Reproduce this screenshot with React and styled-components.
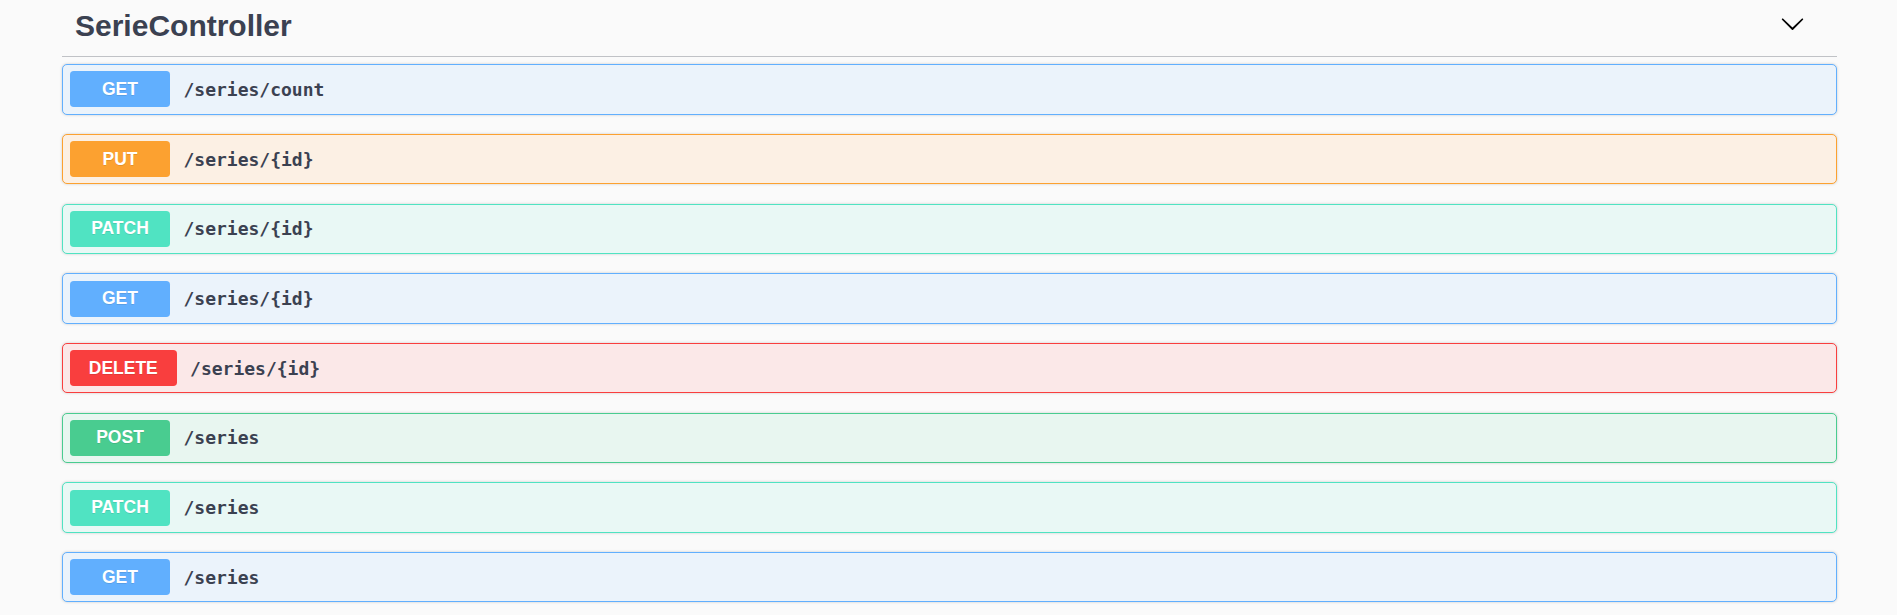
import React from "react";
import styled, { createGlobalStyle } from "styled-components";

const Global = createGlobalStyle`
  html, body { margin: 0; padding: 0; background: #fafafa; }
  body { font-family: "Liberation Sans", Arial, sans-serif; }
`;

const COLORS = {
  GET: { main: "#61affe", bg: "#ebf3fb" },
  PUT: { main: "#fca130", bg: "#fcf0e4" },
  PATCH: { main: "#50e3c2", bg: "#e9f8f5" },
  DELETE: { main: "#f93e3e", bg: "#fbe8e8" },
  POST: { main: "#49cc90", bg: "#e8f6f0" },
};

const Page = styled.div`
  padding: 0 60px 0 62px;
  width: 1775px;
`;

const Section = styled.section`
  display: flex;
  flex-direction: column;
`;

const TagHeader = styled.div`
  display: flex;
  align-items: flex-start;
  justify-content: space-between;
  height: 57px;
  box-sizing: border-box;
  border-bottom: 1px solid rgba(59, 65, 81, 0.3);
  margin-bottom: 7.3px;
`;

const TagTitle = styled.h4`
  margin: 0;
  padding: 8.6px 0 0 13px;
  font-family: "Liberation Sans", Arial, sans-serif;
  font-weight: 700;
  font-size: 30px;
  line-height: 34px;
  color: #3b4151;
`;

const ToggleButton = styled.button`
  border: none;
  background: none;
  padding: 0;
  margin: 10.6px 32px 0 0;
  width: 25px;
  height: 25px;
  display: flex;
  cursor: pointer;
`;

const OpBlock = styled.div`
  display: flex;
  align-items: center;
  box-sizing: border-box;
  height: 50.3px;
  padding: 0 7px;
  margin-bottom: 19.4px;
  border: 1px solid ${(p) => p.$main};
  background: ${(p) => p.$bg};
  border-radius: 5px;
  box-shadow: 0 0 3px rgba(0, 0, 0, 0.19);
`;

const Method = styled.span`
  display: flex;
  align-items: center;
  justify-content: center;
  box-sizing: border-box;
  min-width: 100px;
  height: 36px;
  padding: 0 18.75px;
  background: ${(p) => p.$main};
  color: #fff;
  border-radius: 3.75px;
  font-family: "Liberation Sans", Arial, sans-serif;
  font-weight: 700;
  font-size: 17.5px;
  text-shadow: 0 1px 0 rgba(0, 0, 0, 0.1);
`;

const Path = styled.span`
  margin-left: 13.5px;
  font-family: "DejaVu Sans Mono", monospace;
  font-weight: 700;
  font-size: 18px;
  color: #3b4151;
`;

const ops = [
  ["GET", "/series/count"],
  ["PUT", "/series/{id}"],
  ["PATCH", "/series/{id}"],
  ["GET", "/series/{id}"],
  ["DELETE", "/series/{id}"],
  ["POST", "/series"],
  ["PATCH", "/series"],
  ["GET", "/series"],
];

export default function App() {
  return (
    <>
      <Global />
      <Page>
        <Section>
          <TagHeader>
            <TagTitle>SerieController</TagTitle>
            <ToggleButton aria-label="collapse">
              <svg width="25" height="25" viewBox="0 0 20 20">
                <path
                  fill="#000"
                  d="M17.418 6.109c.272-.268.709-.268.979 0s.271.701 0 .969l-7.908 7.83c-.27.268-.707.268-.979 0l-7.908-7.83c-.27-.268-.27-.701 0-.969.271-.268.709-.268.979 0L10 13.25l7.418-7.141z"
                />
              </svg>
            </ToggleButton>
          </TagHeader>
          {ops.map(([m, p], i) => (
            <OpBlock key={i} $main={COLORS[m].main} $bg={COLORS[m].bg}>
              <Method $main={COLORS[m].main}>{m}</Method>
              <Path>{p}</Path>
            </OpBlock>
          ))}
        </Section>
      </Page>
    </>
  );
}
